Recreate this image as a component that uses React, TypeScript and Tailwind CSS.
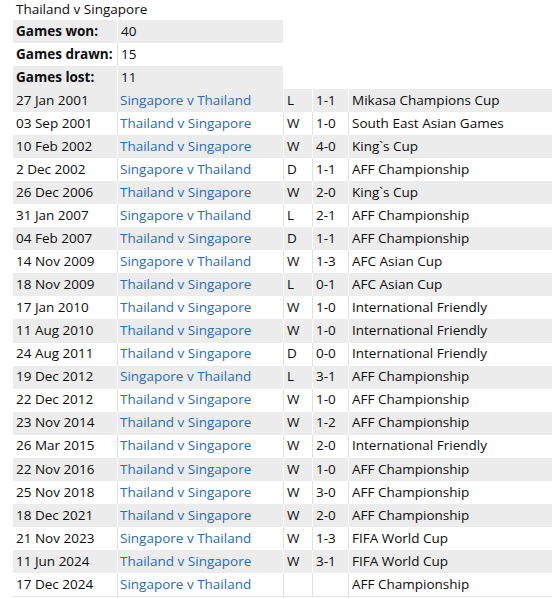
const summary = [
    { label: "Games won:", value: "40" },
    { label: "Games drawn:", value: "15" },
    { label: "Games lost:", value: "11" },
];

const matches = [
    ["27 Jan 2001", "Singapore v Thailand", "L", "1-1", "Mikasa Champions Cup"],
    ["03 Sep 2001", "Thailand v Singapore", "W", "1-0", "South East Asian Games"],
    ["10 Feb 2002", "Thailand v Singapore", "W", "4-0", "King`s Cup"],
    ["2 Dec 2002", "Singapore v Thailand", "D", "1-1", "AFF Championship"],
    ["26 Dec 2006", "Thailand v Singapore", "W", "2-0", "King`s Cup"],
    ["31 Jan 2007", "Singapore v Thailand", "L", "2-1", "AFF Championship"],
    ["04 Feb 2007", "Thailand v Singapore", "D", "1-1", "AFF Championship"],
    ["14 Nov 2009", "Singapore v Thailand", "W", "1-3", "AFC Asian Cup"],
    ["18 Nov 2009", "Thailand v Singapore", "L", "0-1", "AFC Asian Cup"],
    ["17 Jan 2010", "Thailand v Singapore", "W", "1-0", "International Friendly"],
    ["11 Aug 2010", "Thailand v Singapore", "W", "1-0", "International Friendly"],
    ["24 Aug 2011", "Thailand v Singapore", "D", "0-0", "International Friendly"],
    ["19 Dec 2012", "Singapore v Thailand", "L", "3-1", "AFF Championship"],
    ["22 Dec 2012", "Thailand v Singapore", "W", "1-0", "AFF Championship"],
    ["23 Nov 2014", "Thailand v Singapore", "W", "1-2", "AFF Championship"],
    ["26 Mar 2015", "Thailand v Singapore", "W", "2-0", "International Friendly"],
    ["22 Nov 2016", "Thailand v Singapore", "W", "1-0", "AFF Championship"],
    ["25 Nov 2018", "Thailand v Singapore", "W", "3-0", "AFF Championship"],
    ["18 Dec 2021", "Thailand v Singapore", "W", "2-0", "AFF Championship"],
    ["21 Nov 2023", "Singapore v Thailand", "W", "1-3", "FIFA World Cup"],
    ["11 Jun 2024", "Thailand v Singapore", "W", "3-1", "FIFA World Cup"],
    ["17 Dec 2024", "Singapore v Thailand", "", "", "AFF Championship"],
];

const App = () => {
    return (
        <div
            className="w-[552px] h-[599px] bg-white text-[#0d0d0d] text-[13.5px] leading-none overflow-hidden"
            style={{ fontFamily: '"Open Sans", "Noto Sans", sans-serif' }}
        >
            {/* Titre */}
            <div className="h-[20px] pl-[16px] pt-[3px]">Thailand v Singapore</div>

            <div className="pl-[13px]">
                {/* Résumé */}
                {summary.map((row, i) => (
                    <div
                        key={row.label}
                        className={`flex h-[23px] w-[270px] ${i % 2 === 0 ? "bg-[#ececec]" : "bg-white"}`}
                    >
                        <div className="w-[104px] pl-[3px] flex items-center font-bold">{row.label}</div>
                        <div
                            className={`flex-1 pl-[3px] flex items-center border-l ${i % 2 === 0 ? "border-white" : "border-[#e2e2e2]"}`}
                        >
                            {row.value}
                        </div>
                    </div>
                ))}

                {/* Matchs */}
                {matches.map((m, i) => {
                    const sep = i % 2 === 0 ? "border-white" : "border-[#e2e2e2]";
                    return (
                        <div
                            key={m[0]}
                            className={`flex h-[23.05px] ${i % 2 === 0 ? "bg-[#ececec]" : "bg-white"}`}
                        >
                            <div className="w-[104px] pl-[3px] flex items-center">{m[0]}</div>
                            <div className={`w-[166px] pl-[2px] flex items-center border-l ${sep} text-[#2a6cb5]`}>
                                {m[1]}
                            </div>
                            <div className={`w-[29px] pl-[3px] flex items-center border-l ${sep}`}>{m[2]}</div>
                            <div className={`w-[36px] pl-[3px] flex items-center border-l ${sep}`}>{m[3]}</div>
                            <div className={`flex-1 pl-[3px] flex items-center border-l ${sep} whitespace-nowrap`}>
                                {m[4]}
                            </div>
                        </div>
                    );
                })}
                <div className="h-px bg-[#e2e2e2]"></div>
            </div>
        </div>
    );
};

export default App;
